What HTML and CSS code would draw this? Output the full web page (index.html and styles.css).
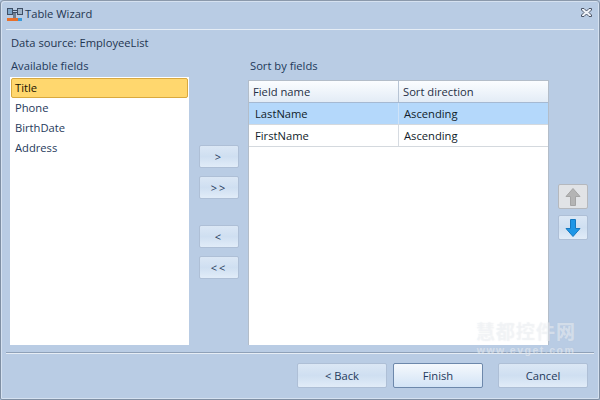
FILE: index.html
```html
<!DOCTYPE html>
<html lang="en">
<head>
<meta charset="utf-8">
<title>Table Wizard</title>
<link rel="stylesheet" href="styles.css">
</head>
<body>
<div class="window">
  <header class="titlebar">
    <svg class="app-icon" width="18" height="16" viewBox="0 0 18 16">
      <rect x="1.500" y="2.500" width="5" height="6" fill="#7fa6c9" stroke="#3f4f66"/>
      <rect x="11.500" y="2.500" width="5" height="6" fill="#9fb4c9" stroke="#3f4f66"/>
      <path d="M6 4.500h6M6 6.500h6" stroke="#3f4f66"/>
      <rect x="7" y="7" width="3" height="5" fill="#6f7f92"/>
      <rect x="1" y="12" width="11" height="3" fill="#e8702a"/>
      <rect x="12" y="12" width="4" height="3" fill="#3a9ad9"/>
    </svg>
    <span class="title">Table Wizard</span>
    <svg class="close" width="13" height="11" viewBox="0 0 13 11">
      <path d="M1.500 1.500h2.500l2.500 2.500 2.500-2.500h2.500v1.500l-2.500 2.500 2.500 2.500v1.500h-2.500l-2.500-2.500-2.500 2.500h-2.500v-1.500l2.500-2.500-2.500-2.500z" fill="#eef2f8" stroke="#4b5568"/>
    </svg>
  </header>
  <main class="content">
    <div class="source">Data source: EmployeeList</div>
    <div class="panes">
      <section class="left">
        <div class="label">Available fields</div>
        <ul class="list">
          <li class="item selected">Title</li>
          <li class="item">Phone</li>
          <li class="item">BirthDate</li>
          <li class="item">Address</li>
        </ul>
      </section>
      <div class="transfer">
        <div class="btn-group">
          <button class="btn small">&gt;</button>
          <button class="btn small">&gt;&gt;</button>
        </div>
        <div class="btn-group">
          <button class="btn small">&lt;</button>
          <button class="btn small">&lt;&lt;</button>
        </div>
      </div>
      <section class="right">
        <div class="label">Sort by fields</div>
        <div class="grid">
          <div class="row head">
            <div class="cell first">Field name</div>
            <div class="cell">Sort direction</div>
          </div>
          <div class="row data current">
            <div class="cell first">LastName</div>
            <div class="cell">Ascending</div>
          </div>
          <div class="row data">
            <div class="cell first">FirstName</div>
            <div class="cell">Ascending</div>
          </div>
        </div>
      </section>
      <div class="order">
        <button class="btn arrow disabled">
          <svg width="16" height="20" viewBox="0 0 16 20"><path d="M8 1.500l7 8h-4.500v9h-5v-9h-4.500z" fill="#b4b4b4" stroke="#a4a4a4"/></svg>
        </button>
        <button class="btn arrow">
          <svg width="16" height="20" viewBox="0 0 16 20"><path d="M5.500 1.500h5v9h4.500l-7 8-7-8h4.500z" fill="#1e96e6" stroke="#1478c0"/></svg>
        </button>
      </div>
    </div>
  </main>
  <footer class="footer">
    <button class="btn wide">&lt; Back</button>
    <button class="btn wide default">Finish</button>
    <button class="btn wide">Cancel</button>
  </footer>
  <div class="watermark" aria-hidden="true">
    <div class="wm-cn">慧都控件网</div>
    <div class="wm-en">www.evget.com</div>
  </div>
</div>
</body>
</html>
```
FILE: styles.css
```css
* { box-sizing: border-box; }
html, body { margin: 0; height: 100%; }
body {
  font-family: "Open Sans", "Noto Sans", sans-serif;
  font-size: 11.2px;
  color: #15283f;
  background: #b9cce4;
  overflow: hidden;
}
.window {
  position: relative;
  width: 600px;
  height: 400px;
  display: flex;
  flex-direction: column;
  border: 1px solid #7f8fa3;
  border-top-color: #8b99ab;
  border-radius: 4px 4px 2px 2px;
  background: #b9cce4;
  box-shadow: inset 1px 1px 0 #d5e1f0, inset -1px -1px 0 #d5e1f0;
}
.titlebar {
  height: 29px;
  display: flex;
  align-items: center;
  padding: 0 1px 3px 0;
  flex: none;
  border-bottom: 1px solid #e6edf5;
  margin: 0 5px 0 5px;
}
.app-icon { flex: none; margin-right: 1px; }
.title { flex: 1; color: #1f3550; }
.close { flex: none; margin-top: -2px; }
.content {
  flex: 1;
  min-height: 0;
  display: flex;
  flex-direction: column;
  padding: 4px 10px 7px 9px;
}
.source { height: 17px; line-height: 17px; color: #1f3550; padding-left: 1px; }
.panes {
  flex: 1;
  min-height: 0;
  margin-top: 6px;
  display: flex;
}
.label { height: 17px; line-height: 17px; color: #22395a; flex: none; padding-left: 1px; }
.left {
  width: 179px;
  flex: none;
  display: flex;
  flex-direction: column;
}
.list {
  list-style: none;
  margin: 3px 0 0;
  padding: 1px;
  flex: 1;
  background: #fff;
}
.item {
  height: 20px;
  line-height: 18px;
  padding: 0 3px;
  border: 1px solid transparent;
  color: #1f3a5c;
}
.item.selected {
  background: #ffd76e;
  border: 1px solid #d9a93e;
  border-radius: 2px;
  color: #1a1400;
}
.transfer {
  width: 59px;
  flex: none;
  padding: 88px 0 0 10px;
  display: flex;
  flex-direction: column;
  gap: 8px;
}
.btn-group { display: flex; flex-direction: column; gap: 8px; }
.btn-group + .btn-group { padding-top: 18px; }
.btn {
  font: inherit;
  color: #1f3a5c;
  background: linear-gradient(#dbe7f5, #cfdff1 50%, #e1ecf8);
  border: 1px solid #aebfd6;
  border-radius: 2px;
  padding: 0;
  display: flex;
  align-items: center;
  justify-content: center;
}
.small { width: 40px; height: 23px; letter-spacing: 2px; font-size: 11px; flex: none; }
.right {
  width: 301px;
  flex: none;
  display: flex;
  flex-direction: column;
}
.right .label { margin-left: 1px; }
.grid {
  flex: 1;
  margin-top: 6px;
  background: #fff;
  border: 1px solid #b3bdc9;
  border-bottom: 0;
}
.row { display: flex; height: 22px; }
.cell { flex: 1; line-height: 22px; padding-left: 5px; color: #111c2a; }
.cell.first { flex: none; width: 150px; border-right: 1px solid #d6dbe1; padding-left: 6px; }
.head {
  background: linear-gradient(#fbfdff, #e3ecf6);
  border-bottom: 1px solid #a5b9d2;
}
.head .cell { padding-left: 4px; color: #1f2f45; line-height: 21px; }
.head .cell.first { border-right-color: #b7c4d4; }
.data { border-bottom: 1px solid #d4d9de; }
.data.current { background: #b4d8fb; }
.data.current .cell.first { border-right-color: #cfe3f8; }
.order {
  flex: 1;
  padding: 127px 0 0 9px;
  display: flex;
  flex-direction: column;
  gap: 6px;
}
.arrow { width: 30px; height: 25px; }
.disabled {
  background: #e1e3e6;
  border-color: #b5b8bd;
}
.footer {
  flex: none;
  height: 47px;
  margin: 0 5px 0 5px;
  border-top: 1px solid #8fa1b8;
  box-shadow: inset 0 1px 0 #e6edf5;
  display: flex;
  justify-content: flex-end;
  align-items: flex-start;
  padding: 10px 6px 0 0;
  gap: 6px;
}
.wide { width: 90px; height: 25px; }
.default {
  background: linear-gradient(#f5f9fd, #e4eef9 50%, #d3e4f6);
  border-color: #6d88ab;
}
.footer .wide + .wide + .wide { margin-left: 9px; }
.watermark {
  position: absolute;
  left: 470px;
  top: 319px;
  width: 110px;
  color: rgba(255, 255, 255, 0.4);
  text-align: center;
  pointer-events: none;
  font-weight: 700;
  text-shadow: 0 0 1px rgba(190, 198, 210, 0.35);
}
.wm-cn {
  font-family: "Noto Sans CJK SC", sans-serif;
  font-size: 19px;
  letter-spacing: 1px;
  line-height: 22px;
}
.wm-en {
  font-family: "Liberation Sans", sans-serif;
  font-size: 10.5px;
  line-height: 12px;
  margin-top: 2px;
  letter-spacing: 1.5px;
}
```
